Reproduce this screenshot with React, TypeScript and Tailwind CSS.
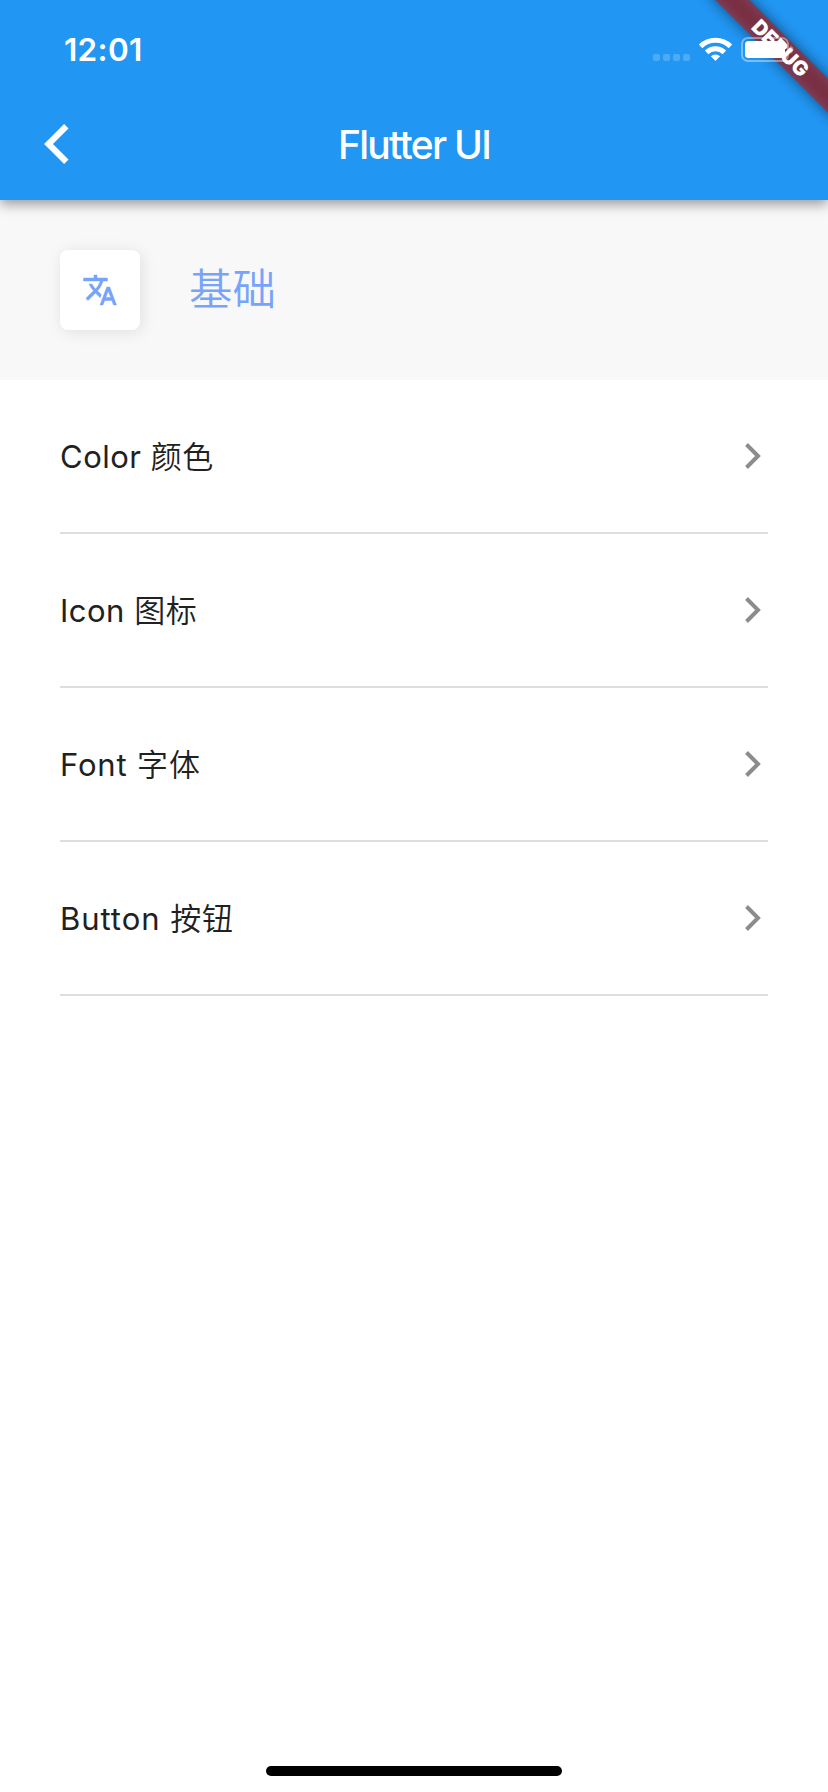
import React from "react";

const items = [
  { latin: "Color", han: "颜色", tracking: "tracking-[0.5px]" },
  { latin: "Icon", han: "图标", tracking: "tracking-[0.5px]" },
  { latin: "Font", han: "字体", tracking: "tracking-[0.85px]" },
  { latin: "Button", han: "按钮", tracking: "tracking-[0.95px]" },
];

function StatusIcons() {
  return (
    <svg className="absolute top-0 left-[640px] h-[200px] w-[188px]" viewBox="640 0 188 200">
      <defs>
        <filter id="soft" x="-20%" y="-200%" width="140%" height="500%">
          <feGaussianBlur stdDeviation="7" />
        </filter>
      </defs>
      <g transform="translate(780.5 48) rotate(45)">
        <rect x="-90" y="-12" width="180" height="24" fill="#000" fillOpacity="0.5" filter="url(#soft)" />
        <rect x="-90" y="-12" width="180" height="24" fill="#b71c1c" fillOpacity="0.627" />
        <text
          x="0"
          y="7.4"
          textAnchor="middle"
          fill="#fff"
          className="font-['Inter','Liberation_Sans',sans-serif] text-[20.4px] font-black"
        >
          DEBUG
        </text>
      </g>
      <g fill="#fff" fillOpacity="0.2">
        <rect x="653" y="54" width="7" height="7" rx="2" />
        <rect x="663" y="54" width="7" height="7" rx="2" />
        <rect x="673" y="54" width="7" height="7" rx="2" />
        <rect x="683" y="54" width="7" height="7" rx="2" />
      </g>
      <g fill="none" stroke="#fff" strokeWidth="5">
        <path d="M700.6 46.4a21.3 21.3 0 0 1 29.8 0" />
        <path d="M706.6 52.4a12.8 12.8 0 0 1 17.8 0" />
      </g>
      <path d="M715.5 61l-4.6-4.7a6.6 6.6 0 0 1 9.2 0z" fill="#fff" />
      <rect x="742" y="38" width="46" height="23" rx="6" fill="none" stroke="#fff" strokeOpacity="0.4" strokeWidth="2" />
      <path d="M790.5 45.500q3 1.500 3 4.200t-3 4.200z" fill="#fff" fillOpacity="0.4" />
      <rect x="745" y="41" width="40" height="17" rx="3.500" fill="#fff" />
    </svg>
  );
}

export default function App() {
  return (
    <div className="flex h-[1792px] w-[828px] flex-col overflow-hidden bg-white font-['Inter','Noto_Sans_CJK_SC',sans-serif]">
      <header className="relative z-10 flex h-[200px] shrink-0 flex-col bg-[#2196f3] text-white shadow-[0_4px_12px_rgba(0,0,0,0.4)]">
        <div className="flex h-[88px] items-center pt-[12px] pl-[64px] text-[31.5px] leading-none font-semibold tracking-[0.3px]">
          12:01
        </div>
        <div className="grid h-[112px] grid-cols-[112px_1fr_112px] items-center">
          <svg className="ml-[44px] h-[48px] w-[48px]" viewBox="0 0 48 48" fill="none" stroke="#fff" strokeWidth="6.200">
            <path d="M22.300 6.200 4.500 24l17.800 17.800" />
          </svg>
          <h1 className="text-center text-[39px] leading-none font-medium tracking-[-1.7px]">Flutter UI</h1>
        </div>
        <StatusIcons />
      </header>
      <section className="flex h-[180px] shrink-0 items-center gap-[49px] bg-[#f8f8f8] pl-[60px]">
        <div className="flex h-[80px] w-[80px] items-center justify-center rounded-lg bg-white shadow-[2px_2px_16px_rgba(0,0,0,0.1)]">
          <svg className="h-[36px] w-[36px]" viewBox="0 0 24 24" fill="#77a4fa" stroke="#77a4fa" strokeWidth="0.3">
            <path d="M12.870 15.070l-2.540-2.510.03-.03c1.740-1.940 2.980-4.170 3.710-6.530H17V4h-7V2H8v2H1v1.990h11.170C11.500 7.920 10.440 9.750 9 11.350 8.070 10.320 7.300 9.190 6.690 8h-2c.73 1.630 1.730 3.170 2.980 4.560l-5.090 5.020L4 19l5-5 3.110 3.110.76-2.040zM18.500 10h-2L12 22h2l1.120-3h4.750L21 22h2l-4.500-12zm-2.620 7l1.620-4.330L19.120 17h-3.240z" />
          </svg>
        </div>
        <h2 className="text-[43.5px] leading-none font-[350] text-[#77a4fa]">基础</h2>
      </section>
      <ul className="flex flex-col px-[60px]">
        {items.map(({ latin, han, tracking }) => (
          <li key={latin} className="flex h-[154px] items-center justify-between border-b-2 border-[#dedede]">
            <span className={`text-[31px] leading-none font-normal text-[#212121] ${tracking}`}>
              {latin} <span className="font-[350]">{han}</span>
            </span>
            <svg className="h-[32px] w-[32px]" viewBox="0 0 32 32" fill="none" stroke="#8c8c8c" strokeWidth="4">
              <path d="M10.500 4.500 22 16 10.500 27.500" />
            </svg>
          </li>
        ))}
      </ul>
      <div className="mt-auto mb-[16px] h-[10px] w-[296px] self-center rounded-full bg-black" />
    </div>
  );
}
